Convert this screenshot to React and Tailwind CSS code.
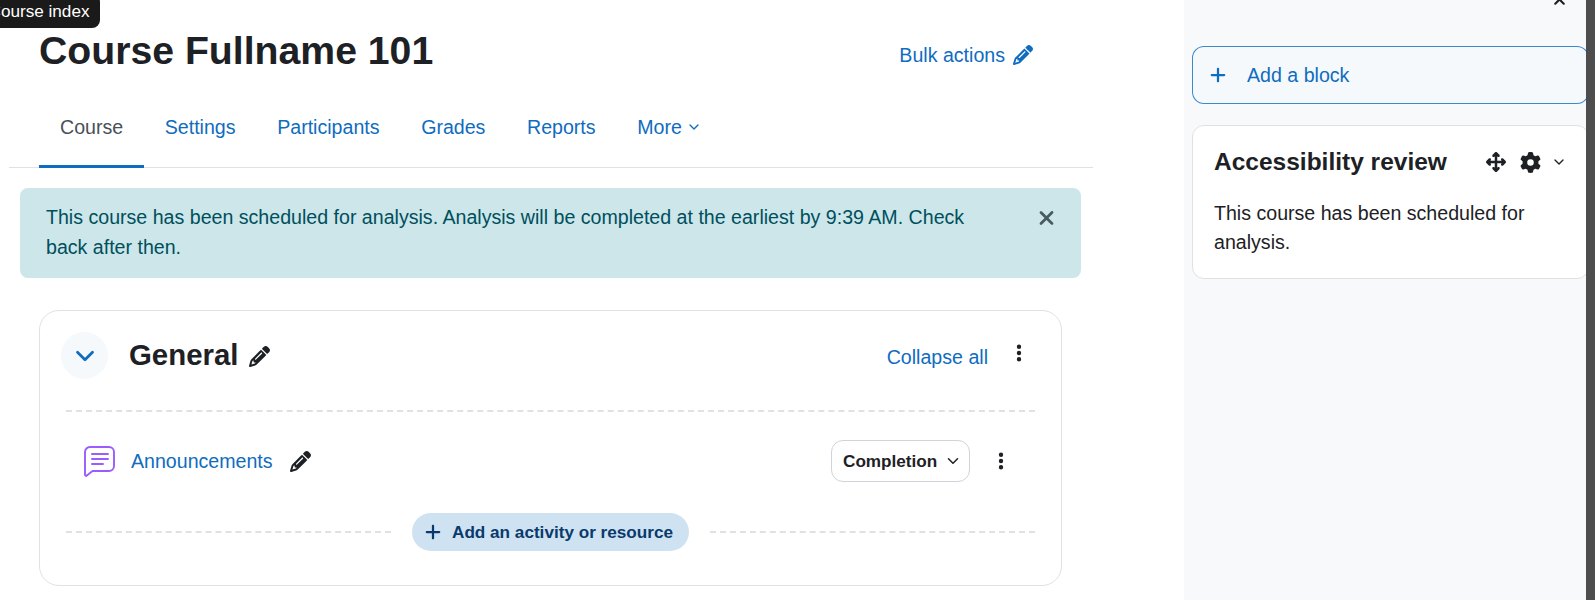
import { ChevronDown } from 'lucide-react'
import {
  FaPencil,
  FaPlus,
  FaXmark,
  FaEllipsisVertical,
  FaGear,
  FaArrowsUpDownLeftRight,
} from 'react-icons/fa6'

const tabs = ['Settings', 'Participants', 'Grades', 'Reports']

const ForumIcon = () => (
  <svg viewBox="0 0 31 31" className="w-[31px] h-[31px] text-[#9a5cff]" fill="none" stroke="currentColor" strokeWidth="1.9" strokeLinejoin="round" strokeLinecap="round">
    <path d="M6 1h19a5 5 0 0 1 5 5v14a5 5 0 0 1-5 5H8.5L2.2 30 1 29V6a5 5 0 0 1 5-5z" />
    <path d="M8 8h16M8 13h16M8 18h11" />
  </svg>
)

const Header = () => (
  <div className="flex items-start justify-between pl-[39px] pr-[151px]">
    <h1 className="text-[39.2px] leading-[45px] font-bold text-[#1d2125] mt-[28px]">Course Fullname 101</h1>
    <a className="flex items-center gap-[8px] mt-[40px] text-[#0f6cbf]">
      Bulk actions <FaPencil className="w-[20px] h-[20px]" />
    </a>
  </div>
)

const CourseNav = () => (
  <nav className="flex items-stretch h-[73px] mt-[22px] ml-[9px] w-[1084px] pl-[30px] border-b border-[#dee2e6]">
    <a className="flex items-center pl-[21px] pr-[20.8px] text-[#495057] border-b-[3px] border-[#0f6cbf] -mb-px pb-[6px]">Course</a>
    {tabs.map((tab) => (
      <a key={tab} className="flex items-center px-[20.8px] text-[#0f6cbf] pb-[8px]">{tab}</a>
    ))}
    <a className="flex items-center gap-[4px] px-[20.8px] text-[#0f6cbf] pb-[8px]">
      More <ChevronDown className="w-[16px] h-[16px]" />
    </a>
  </nav>
)

const Notice = () => (
  <div className="flex justify-between ml-[20px] mt-[20px] w-[1061px] h-[90px] rounded-[8px] bg-[#cce6ea] text-[#004f5c] pl-[26px] pr-[25px] pt-[14px]">
    <p className="w-[925px]">This course has been scheduled for analysis. Analysis will be completed at the earliest by 9:39 AM. Check back after then.</p>
    <FaXmark className="w-[19px] h-[22px] mt-[5px] text-[#495b5f]" />
  </div>
)

const CourseSection = () => (
  <section className="ml-[39px] mt-[32px] w-[1023px] h-[276px] rounded-[20px] border border-[#dee2e6] pl-[21px] pr-[26px] pt-[21px]">
    <div className="flex items-center">
      <button className="w-[47px] h-[47px] rounded-full bg-[#f5f9fc] flex items-center justify-center text-[#0f6cbf]">
        <ChevronDown className="w-[30px] h-[30px]" strokeWidth={2.2} />
      </button>
      <h2 className="ml-[21px] -mt-[3px] text-[29.4px] leading-[35px] font-bold text-[#1d2125]">General</h2>
      <FaPencil className="ml-[11px] mt-[2px] w-[21px] h-[21px] text-[#1d2125]" />
      <a className="ml-auto mt-[2px] text-[#0f6cbf]">Collapse all</a>
      <FaEllipsisVertical className="ml-[22px] mr-[7px] -mt-[5px] w-[18px] h-[20px] text-[#1d2125]" />
    </div>
    <div className="ml-[5px] mt-[31px] border-t-2 border-dashed border-[#dee2e6]" />
    <div className="flex items-center mt-[28px] ml-[23px] h-[42px]">
      <ForumIcon />
      <a className="ml-[16px] text-[#0f6cbf]">Announcements</a>
      <FaPencil className="ml-[17px] w-[21px] h-[21px] text-[#1d2125]" />
      <button className="ml-auto flex items-center gap-[7px] h-[42px] w-[139px] pl-[11px] rounded-[12px] border border-[#ced4da] text-[17.15px] font-bold text-[#1d2125]">
        Completion <ChevronDown className="w-[18px] h-[18px]" />
      </button>
      <FaEllipsisVertical className="ml-[22px] mr-[25px] w-[18px] h-[20px] text-[#1d2125]" />
    </div>
    <div className="flex items-center ml-[5px] mt-[31px]">
      <div className="flex-1 border-t-2 border-dashed border-[#dee2e6]" />
      <button className="mx-[21px] flex items-center h-[38px] w-[277px] pl-[13px] rounded-full bg-[#cfe2f2] text-[17.15px] font-bold text-[#0a3a6b]">
        <FaPlus className="w-[16px] h-[18px]" />
        <span className="ml-[11px]">Add an activity or resource</span>
      </button>
      <div className="flex-1 border-t-2 border-dashed border-[#dee2e6]" />
    </div>
  </section>
)

const BlockDrawer = () => (
  <aside className="w-[402px] bg-[#f8f9fa] pl-[8px] flex flex-col overflow-hidden">
    <div className="flex justify-end pr-[18px] h-[46px] -mt-[9px] mb-[9px]">
      <FaXmark className="w-[17px] h-[17px] text-[#1d2125]" />
    </div>
    <button className="flex items-center h-[58px] -mr-[3px] rounded-[12px] border border-[#0f6cbf]/80 bg-[#f5f9fc] pl-[17px] text-[#0f6cbf]">
      <FaPlus className="w-[16px] h-[18px]" />
      <span className="ml-[21px]">Add a block</span>
    </button>
    <div className="mt-[21px] -mr-[3px] h-[154px] rounded-[12px] border border-[#dee2e6] bg-white pl-[21px] pr-[21.5px] pt-[22px]">
      <div className="flex items-center">
        <h3 className="text-[24.5px] leading-[28px] font-bold text-[#1d2125]">Accessibility review</h3>
        <FaArrowsUpDownLeftRight className="ml-auto w-[20px] h-[20px] text-[#1d2125]" />
        <FaGear className="ml-[14px] w-[21px] h-[21px] text-[#1d2125]" />
        <ChevronDown className="ml-[10px] w-[16px] h-[16px] text-[#1d2125]" />
      </div>
      <p className="mt-[23px] leading-[29.4px] text-[#1d2125]">This course has been scheduled for analysis.</p>
    </div>
  </aside>
)

export default function App() {
  return (
    <div className="relative flex h-[600px] overflow-hidden bg-white font-['Liberation_Sans',Arial,sans-serif] text-[19.6px] leading-[30px]">
      <div className="absolute -left-[22px] -top-[6px] h-[34px] rounded-[8px] bg-[#1a1a1a] px-[10.5px] text-[17.15px] leading-[34px] text-white">Course index</div>
      <main className="w-[1184px] shrink-0">
        <Header />
        <CourseNav />
        <Notice />
        <CourseSection />
      </main>
      <BlockDrawer />
      <div className="w-[9px] shrink-0 bg-[#4d4d4d]" />
    </div>
  )
}
